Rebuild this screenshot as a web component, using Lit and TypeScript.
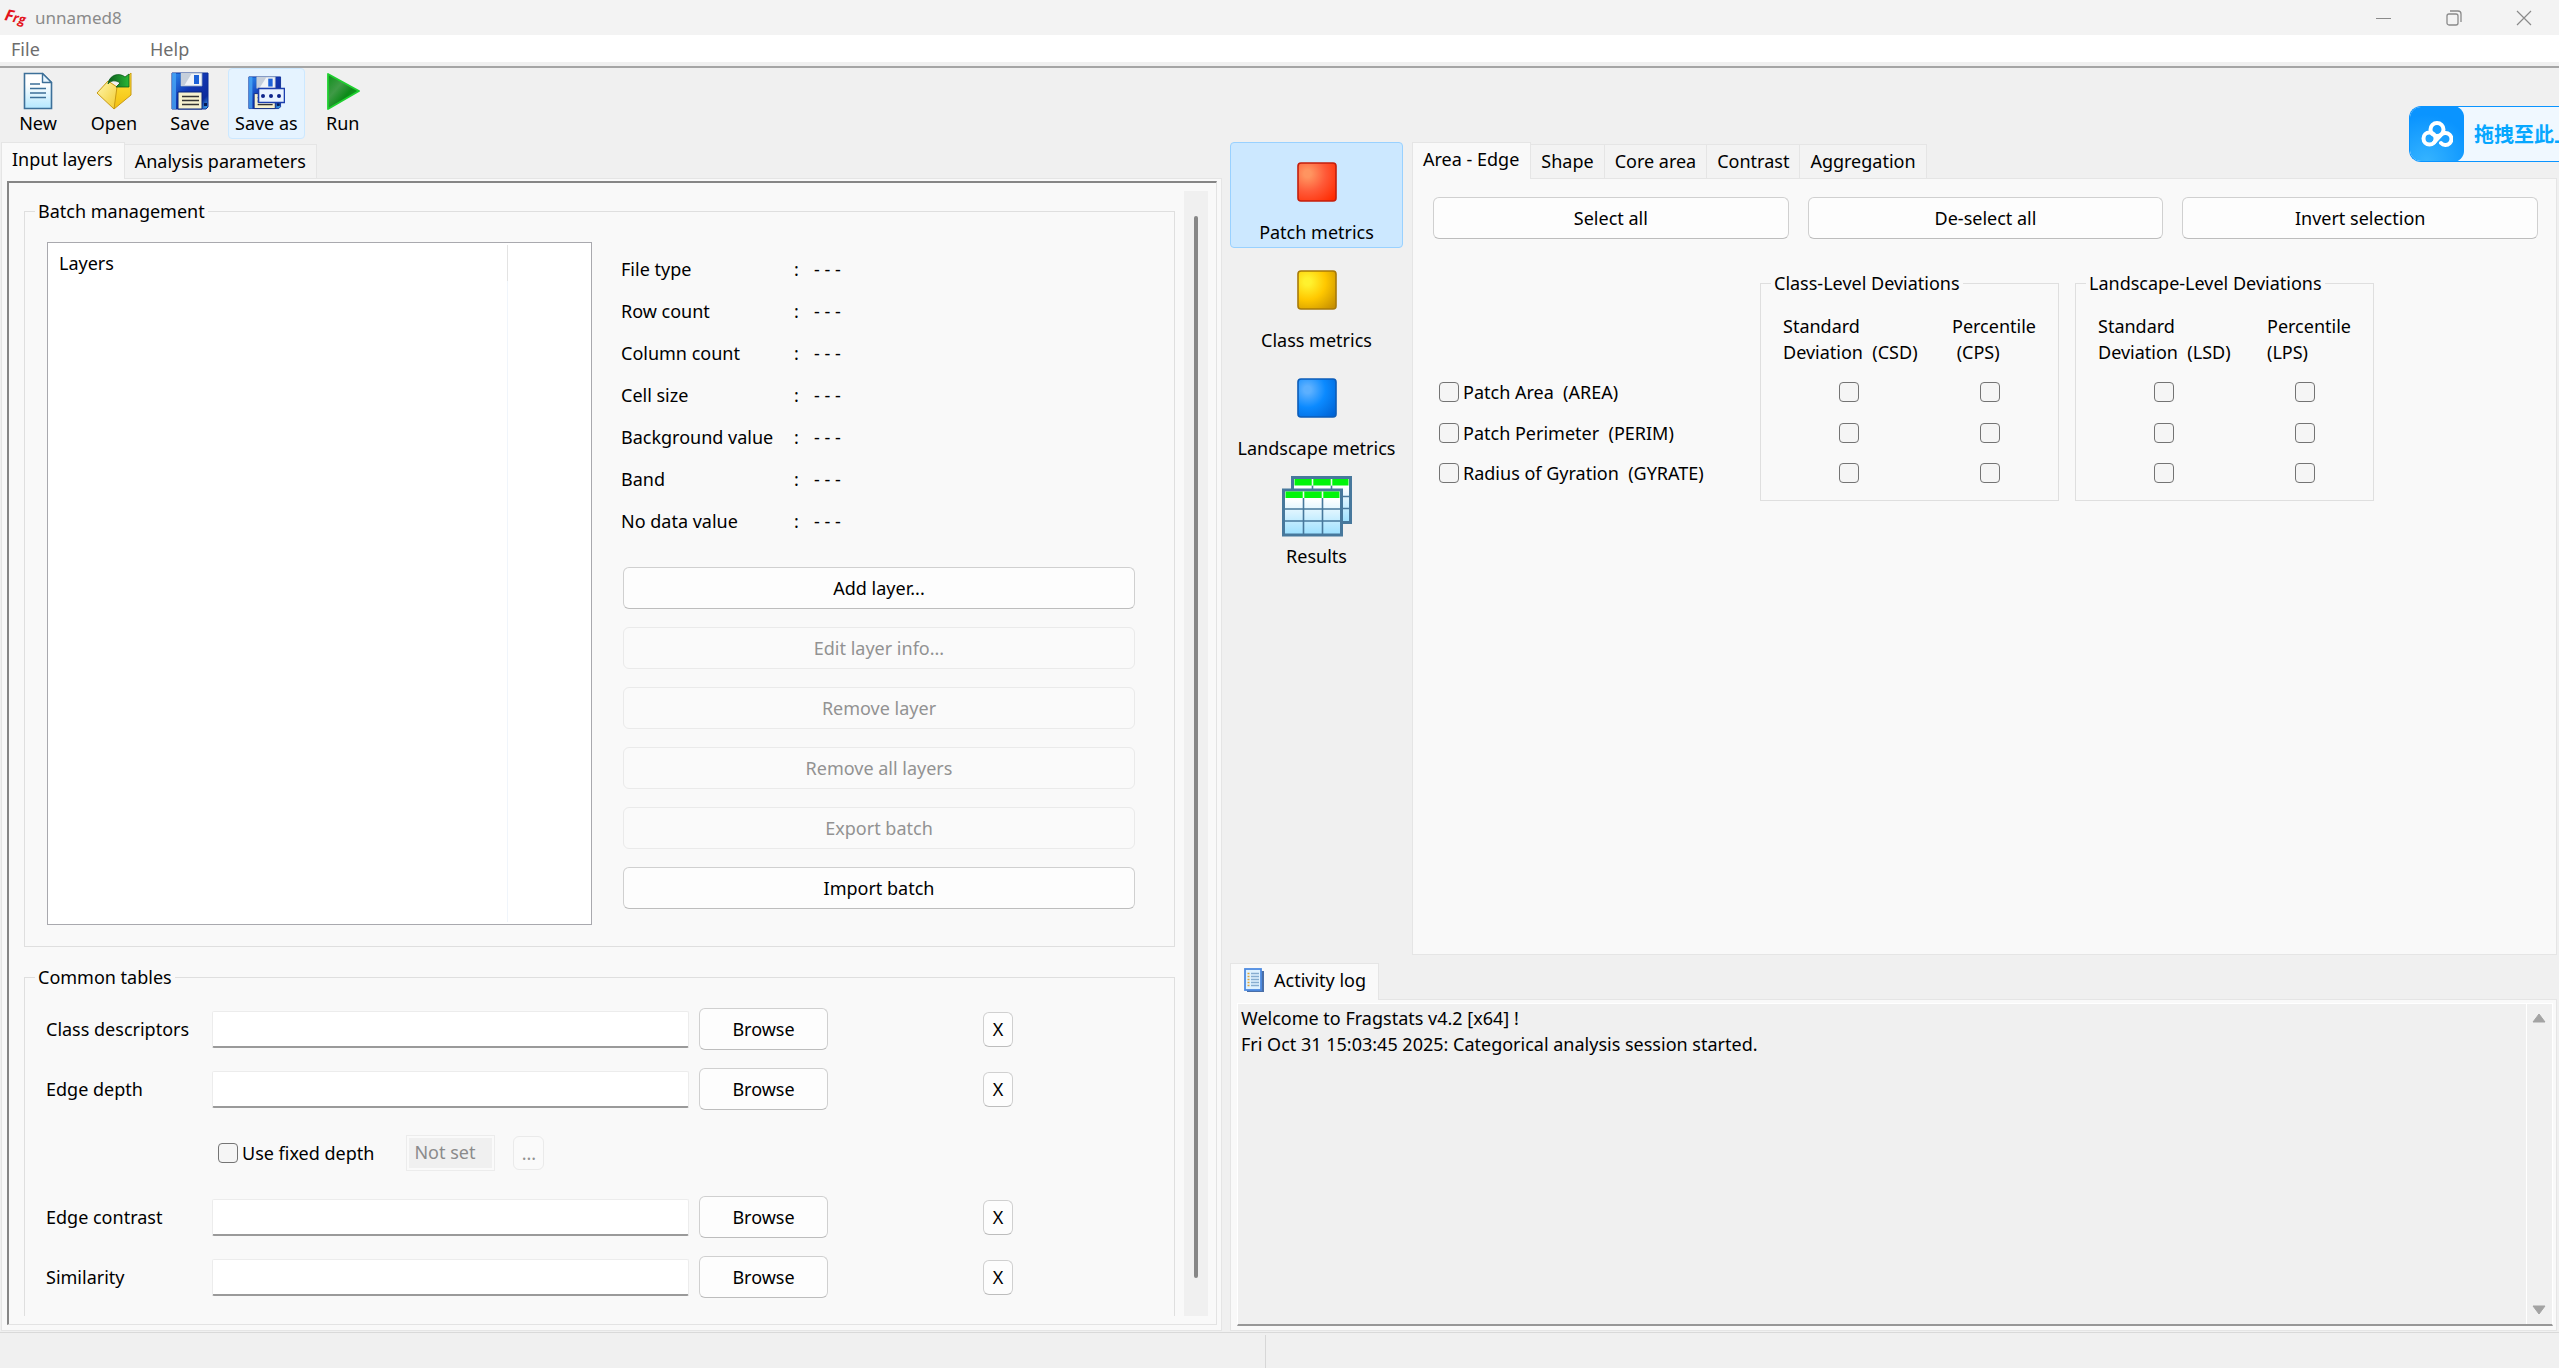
import { LitElement, html, css, svg } from "lit";
import { customElement, state } from "lit/decorators.js";
import { classMap } from "lit/directives/class-map.js";

const infoRows = [
  "File type",
  "Row count",
  "Column count",
  "Cell size",
  "Background value",
  "Band",
  "No data value",
];

const batchActions = [
  { label: "Add layer...", enabled: true },
  { label: "Edit layer info...", enabled: false },
  { label: "Remove layer", enabled: false },
  { label: "Remove all layers", enabled: false },
  { label: "Export batch", enabled: false },
  { label: "Import batch", enabled: true },
];

const metrics = [
  { label: "Patch Area  (AREA)", id: "area" },
  { label: "Patch Perimeter  (PERIM)", id: "perim" },
  { label: "Radius of Gyration  (GYRATE)", id: "gyrate" },
];

const deviations = [
  { title: "Class-Level Deviations", sd: "Standard\nDeviation  (CSD)", ps: "Percentile\n (CPS)", key: "c" },
  { title: "Landscape-Level Deviations", sd: "Standard\nDeviation  (LSD)", ps: "Percentile\n(LPS)", key: "l" },
];

const logText =
  "Welcome to Fragstats v4.2 [x64] !\nFri Oct 31 15:03:45 2025: Categorical analysis session started.";

const newIcon = html`<svg width="38" height="38" viewBox="0 0 38 38" aria-hidden="true">
  <defs><linearGradient id="gNew" x1="0" y1="0" x2="0" y2="1"><stop offset=".3" stop-color="#fff" /><stop offset="1" stop-color="#b4e8ff" /></linearGradient></defs>
  <path d="M5.5 1.5h18l9 9v26h-27z" fill="url(#gNew)" stroke="#3d7099" stroke-width="1.6" />
  <path d="M23.500 1.500v9h9z" fill="#e8f6ff" stroke="#3d7099" stroke-width="1.4" stroke-linejoin="round" />
  <path d="M11 12h10M11 16.500h16M11 21h16M11 25.500h16" stroke="#3d7099" stroke-width="1.500" />
</svg>`;

const openIcon = html`<svg width="38" height="38" viewBox="0 0 38 38" aria-hidden="true">
  <defs>
    <linearGradient id="gOp1" x1="0" y1="0" x2="1" y2="1"><stop offset="0" stop-color="#fff7b0" /><stop offset="1" stop-color="#f2cb2c" /></linearGradient>
    <linearGradient id="gOp2" x1="0" y1="0" x2="0" y2="1"><stop offset="0" stop-color="#ffe63c" /><stop offset="1" stop-color="#f3bf10" /></linearGradient>
    <linearGradient id="gOp3" x1="0" y1="0" x2="1" y2="0"><stop offset="0" stop-color="#0c5a1c" /><stop offset="1" stop-color="#27b836" /></linearGradient>
  </defs>
  <path d="M20 16 36 1v22L19 37z" fill="url(#gOp2)" stroke="#c99a12" />
  <path d="M2 21 13 9l9 6-3 22z" fill="url(#gOp1)" stroke="#c99a12" stroke-linejoin="round" />
  <path d="M13 12C14 3 24 0 30 5l4-3v13H21l4-4c-4-3-9-3-12 1z" fill="url(#gOp3)" stroke="#0d5d1c" stroke-width=".8" stroke-linejoin="round" />
</svg>`;

const floppy = svg`
  <path d="M1 1h36v34l-2 2H1z" fill="url(#gFl)" stroke="#0b2c96" />
  <path d="M1 1h4v36H1z" fill="#49a4f4" opacity=".8" />
  <path d="M10 1h21v13H10z" fill="#f1f4f8" stroke="#8fa3bd" stroke-width=".8" />
  <path d="M10 1h11l-8 13h-3z" fill="#c6cfdb" />
  <path d="M23 3h5v9h-5z" fill="#1d62d8" />
  <path d="M7 20h24v17H7z" fill="#f6f1cf" stroke="#08257c" />
  <path d="M11 24.500h17M11 28.500h17M11 32.500h17" stroke="#333" stroke-width="1.400" />
  <path d="M33 31h3v3h-3z" fill="#061a55" />`;

const floppyFill = svg`<linearGradient id="gFl" x1="0" y1="0" x2="1" y2="1"><stop offset="0" stop-color="#2b8cf0" /><stop offset=".45" stop-color="#1238b4" /><stop offset=".8" stop-color="#0d2b9c" /><stop offset="1" stop-color="#3db4f5" /></linearGradient>`;

const saveIcon = html`<svg width="38" height="38" viewBox="0 0 38 38" aria-hidden="true"><defs>${floppyFill}</defs>${floppy}</svg>`;

const saveAsIcon = html`<svg width="38" height="38" viewBox="0 0 38 38" aria-hidden="true">
  <defs>${floppyFill}</defs>
  <g transform="translate(1 4) scale(.88)">${floppy}</g>
  <path d="M11.500 16.500h26v14h-26z" fill="#e9f3ff" stroke="#1c3fae" stroke-width="1.600" />
  <circle cx="16" cy="24" r="2" fill="#10258c" />
  <circle cx="24" cy="24" r="2" fill="#10258c" />
  <circle cx="32" cy="24" r="2" fill="#10258c" />
</svg>`;

const runIcon = html`<svg width="38" height="38" viewBox="0 0 38 38" aria-hidden="true">
  <defs><linearGradient id="gRun" x1="0" y1="0" x2="1" y2="1"><stop offset="0" stop-color="#0f8f1c" /><stop offset=".35" stop-color="#3f9a46" /><stop offset=".6" stop-color="#0c8a18" /><stop offset="1" stop-color="#16c626" /></linearGradient></defs>
  <path d="M4 2 35 19 4 37z" fill="url(#gRun)" stroke="#1fd02f" stroke-width="1.800" stroke-linejoin="round" />
</svg>`;

const cube = (id: string, hi: string, mid: string, low: string, edge: string) => html`<svg width="40" height="40" viewBox="0 0 40 40" aria-hidden="true">
  <defs><radialGradient id=${id} cx=".25" cy=".28" r=".95"><stop offset=".1" stop-color=${hi} /><stop offset=".5" stop-color=${mid} /><stop offset="1" stop-color=${low} /></radialGradient></defs>
  <rect x="1" y="1" width="38" height="38" rx="3" fill="url(#${id})" stroke=${edge} stroke-width="1.600" />
</svg>`;

const sheet = (x: number, y: number) => svg`
  <rect x=${x} y=${y} width="58" height="45" fill="url(#gRes)" stroke="#47789c" stroke-width="3" />
  <rect x=${x + 2} y=${y + 1.5} width="54" height="6.500" fill="#00f50a" />
  <path d="M${x + 20} ${y + 8}v36M${x + 39} ${y + 8}v36M${x + 1} ${y + 19}h56M${x + 1} ${y + 31}h56" stroke="#47789c" stroke-width="1.600" />
  <path d="M${x + 20} ${y + 1.5}v6.500M${x + 39} ${y + 1.5}v6.500" stroke="#e9ffe9" stroke-width="1.600" />`;

const resultsIcon = html`<svg width="72" height="62" viewBox="0 0 72 62" aria-hidden="true">
  <defs><linearGradient id="gRes" x1="0" y1="0" x2="0" y2="1"><stop offset=".2" stop-color="#fff" /><stop offset="1" stop-color="#9be0ff" /></linearGradient></defs>
  ${sheet(11.5, 2.5)} ${sheet(2.5, 15)}
</svg>`;

const toolItems = [
  { label: "New", icon: newIcon },
  { label: "Open", icon: openIcon },
  { label: "Save", icon: saveIcon },
  { label: "Save as", icon: saveAsIcon, hot: true },
  { label: "Run", icon: runIcon },
];

const views = [
  { label: "Patch metrics", icon: cube("gRed", "#ff9460", "#ff5a38", "#ff2a00", "#c41e0c") },
  { label: "Class metrics", icon: cube("gYel", "#fff12e", "#ffc800", "#c79000", "#a87a08") },
  { label: "Landscape metrics", icon: cube("gBlu", "#5cb0ff", "#0b8aff", "#0064d6", "#0c5cb8") },
  { label: "Results", icon: resultsIcon },
];

@customElement("app-root")
export class AppRoot extends LitElement {
  @state() private view = 0;
  @state() private leftTab = 0;
  @state() private metricTab = 0;

  static styles = css`
    :host {
      display: flex;
      flex-direction: column;
      height: 100vh;
      overflow: hidden;
      background: #f0f0f0;
      color: #000;
      font: 18px/24px "Noto Sans", "Noto Sans CJK SC", sans-serif;
    }
    * { box-sizing: border-box; }
    svg { display: block; flex: none; }
    button, input, textarea { font: inherit; color: inherit; margin: 0; }
    button { cursor: default; white-space: nowrap; }

    .titlebar {
      display: flex;
      align-items: center;
      height: 35px;
      flex: none;
      padding-left: 4px;
      gap: 4px;
      background: #f3f3f3;
      color: #8a8a8a;
      font-size: 17px;
    }
    .mark { font: italic bold 16px "Open Sans", sans-serif; fill: #e3141c; }
    .mark-small { font-size: 13px; }
    .caption { flex: 1; font: inherit; margin: 0; }
    .winbtns { display: flex; }
    .winbtn {
      width: 70px;
      height: 35px;
      padding: 0;
      border: 0;
      background: none;
      display: grid;
      place-items: center;
    }
    .menubar {
      display: flex;
      flex: none;
      height: 27px;
      background: #fff;
      padding-left: 11px;
    }
    .menu {
      border: 0;
      padding: 0;
      background: none;
      color: #6d6d6d;
      line-height: 28px;
      text-align: left;
      min-width: 139px;
    }
    .rule {
      flex: none;
      height: 6px;
      background: #f0f0f0;
      border-bottom: 2px solid #fff;
    }
    .rule::before {
      content: "";
      display: block;
      height: 4px;
      border-bottom: 2px solid #a5a5a5;
    }
    .toolbar { display: flex; flex: none; height: 74px; }
    .tool {
      display: flex;
      flex-direction: column;
      align-items: center;
      gap: 1px;
      min-width: 76px;
      height: 71px;
      padding: 3px 6px 0;
      border: 1px solid transparent;
      border-radius: 4px;
      background: none;
    }
    .tool.hot { background: #e5f3ff; border-color: #cce8ff; }

    .workspace {
      flex: 1;
      min-height: 0;
      display: grid;
      grid-template-columns: minmax(0, 1222fr) minmax(0, 1337fr);
      grid-template-rows: minmax(0, 1fr);
    }
    .notebook { display: flex; flex-direction: column; min-width: 0; min-height: 0; }
    .tabs { display: flex; align-items: flex-end; flex: none; height: 36px; }
    .tab {
      height: 34px;
      padding: 0 10px;
      line-height: 33px;
      border: 1px solid #e5e5e5;
      border-width: 1px 1px 0 0;
      background: #f3f3f3;
    }
    .tab.on {
      position: relative;
      display: flex;
      align-items: center;
      gap: 10px;
      height: 37px;
      margin-bottom: -1px;
      padding: 0 11px 4px 10px;
      border-left-width: 1px;
      background: #f9f9f9;
      line-height: 24px;
    }
    .page { flex: 1; min-height: 0; background: #f9f9f9; border: 1px solid #e5e5e5; }

    .left { padding: 0 0 1px 1px; }
    .left .page { display: flex; padding: 2px 4px 5px 5px; }
    .scroller {
      flex: 1;
      min-width: 0;
      display: flex;
      gap: 9px;
      padding: 8px 8px 8px 15px;
      border: 1px solid #e3e3e3;
      border-top: 2px solid #868686;
      border-left: 2px solid #868686;
    }
    .form {
      flex: 1;
      min-width: 0;
      display: flex;
      flex-direction: column;
      gap: 18px;
      padding-top: 8px;
      overflow: hidden;
    }
    .track { flex: none; width: 24px; background: #f0f0f0; padding: 25px 10px 38px; }
    .thumb { height: 100%; border-radius: 2px; background: #878787; }

    .group { margin: 0; min-width: 0; border: 1px solid #dfdfdf; }
    .group > legend { padding: 0 3px; margin-left: -12px; white-space: nowrap; }
    .batch { padding: 19px 39px 21px 22px; flex: none; }
    .batch-body {
      display: grid;
      grid-template-columns: minmax(0, 545fr) minmax(0, 514fr);
      gap: 29px;
    }
    .layers { display: flex; background: #fff; border: 1px solid #a9a9ae; padding: 2px; }
    .layer-table { width: 85%; border-collapse: collapse; height: 100%; }
    .layer-table th {
      height: 36px;
      padding: 0 9px;
      font-weight: normal;
      text-align: left;
      border-right: 1px solid #e3e3e3;
    }
    .layer-table td { border-right: 1px solid #f0f5fb; }
    .info { padding: 6px 0 16px; }
    .facts { margin: 0 0 25px; }
    .fact { display: flex; line-height: 42px; }
    .fact dt { width: 173px; }
    .fact dd { margin: 0; white-space: pre; }
    .colon { display: inline-block; width: 20px; }
    .actions { display: flex; flex-direction: column; gap: 18px; padding-left: 2px; }
    .btn {
      height: 42px;
      padding: 0 0 1px;
      border: 1px solid #d0d0d0;
      border-bottom-color: #bdbdbd;
      border-radius: 6px;
      background: #fdfdfd;
      text-align: center;
    }
    .btn:disabled { color: #929292; border-color: #eaeaea; background: #fafafa; }

    .common { flex: 1; min-height: 0; border-bottom: 0; padding: 10px 39px 0 21px; }
    .common > legend { margin-left: -11px; }
    .file-row {
      display: grid;
      grid-template-columns: 166px minmax(0, 477fr) 139px minmax(0, 155fr) 30px minmax(0, 122fr);
      align-items: center;
      height: 60px;
    }
    .field {
      width: 100%;
      height: 37px;
      padding: 0 8px;
      border: 1px solid #ececec;
      border-bottom: 2px solid #9a9a9a;
      border-radius: 2px;
      background: #fff;
    }
    .browse { margin-left: 10px; }
    .clear { grid-column: 5; height: 35px; }
    .fixed-row { display: flex; align-items: center; height: 68px; padding-left: 172px; }
    .check { display: flex; align-items: center; gap: 4px; white-space: pre; }
    .box {
      appearance: none;
      display: block;
      flex: none;
      width: 20px;
      height: 20px;
      border: 1px solid #747474;
      border-radius: 4px;
      background: #f5f5f5;
    }
    .box:checked { background: #0067c0; }
    .depth {
      width: 89px;
      height: 36px;
      margin: 0 18px 0 32px;
      padding: 0 7px 3px;
      border: 1px solid #ececec;
      background: #f0f0f0;
      color: #8b8b8b;
      box-shadow: inset 0 0 0 2px #fafafa;
    }
    .more { width: 31px; height: 34px; }

    .right {
      display: flex;
      flex-direction: column;
      gap: 8px;
      min-width: 0;
      padding: 0 2px 1px 8px;
    }
    .upper { flex: 812; min-height: 0; display: flex; gap: 9px; }
    .views { flex: none; width: 173px; display: flex; flex-direction: column; gap: 2px; }
    .view {
      display: flex;
      flex-direction: column;
      align-items: center;
      height: 106px;
      padding: 0;
      border: 1px solid transparent;
      border-radius: 4px;
      background: none;
    }
    .view.on { background: #cce8ff; border-color: #99d1ff; }
    .glyph { height: 77px; display: grid; place-items: center; }
    .upper .notebook { flex: 1; }
    .upper .page { padding: 18px 18px 0 20px; }
    .selectors { display: grid; grid-template-columns: repeat(3, minmax(0, 1fr)); gap: 19px; margin-bottom: 32px; }
    .matrix { display: flex; align-items: flex-end; gap: 16px; padding-left: 6px; }
    .names { width: 305px; padding-bottom: 8px; }
    .names .check { height: 41px; }
    .names .check:last-child, .dev-table tr:last-child td { height: 40px; }
    .dev { padding: 18px 0 7px 22px; }
    .dev-table { border-collapse: collapse; table-layout: fixed; width: 275px; }
    .dev-table th {
      width: 169px;
      padding: 0 0 6px;
      font-weight: normal;
      text-align: left;
      line-height: 26px;
      white-space: pre;
    }
    .dev-table th + th { width: 106px; }
    .dev-table td { height: 41px; padding: 0 0 0 56px; vertical-align: middle; }
    .dev-table td + td { padding-left: 28px; }

    .log { flex: 367; }
    .log .tab.on { padding: 0 12px 4px 13px; }
    .log .page { display: flex; padding: 3px 3px 4px 6px; }
    .console {
      flex: 1;
      min-width: 0;
      display: flex;
      border: 1px solid #fff;
      border-bottom: 2px solid #979797;
      background: #f0f0f0;
    }
    .output {
      flex: 1;
      min-width: 0;
      resize: none;
      border: 0;
      outline: 0;
      padding: 1px 3px;
      background: none;
      line-height: 26px;
      overflow: hidden;
    }
    .arrows {
      display: flex;
      flex-direction: column;
      justify-content: space-between;
      width: 26px;
      padding: 9px 5px;
      border-left: 1px solid #fff;
    }
    .status {
      flex: none;
      height: 36px;
      display: grid;
      grid-template-columns: 1265fr 1294fr;
      border-top: 1px solid #d9d9d9;
      padding-top: 2px;
    }
    .cell + .cell { border-left: 1px solid #d7d7d7; }

    .dropzone {
      position: absolute;
      top: 106px;
      right: 0;
      width: 150px;
      height: 56px;
      display: flex;
      align-items: center;
      overflow: hidden;
      border: 1px solid #0a94ff;
      border-right: 0;
      border-radius: 12px 0 0 12px;
      background: #f0f8ff;
      color: #06a7ff;
      font-weight: bold;
      font-family: "Noto Sans CJK SC", sans-serif;
      font-size: 20px;
      white-space: nowrap;
    }
    .badge {
      flex: none;
      display: grid;
      place-items: center;
      width: 54px;
      height: 56px;
      margin-right: 10px;
      border-radius: 11px;
      background: radial-gradient(circle at 30% 100%, #36b4ff, #0a94ff 70%);
    }
  `;

  private tabs(labels: string[], active: number, pick: (i: number) => void) {
    return html`<div class="tabs" role="tablist">
      ${labels.map(
        (label, i) => html`<button
          class=${classMap({ tab: true, on: i === active })}
          role="tab"
          aria-selected=${i === active}
          @click=${() => pick(i)}
        >${label}</button>`
      )}
    </div>`;
  }

  private fileRow(label: string, id: string) {
    return html`<div class="file-row">
      <label for=${id}>${label}</label>
      <input class="field" id=${id} type="text" />
      <button class="btn browse">Browse</button>
      <button class="btn clear" aria-label="Clear ${label}">X</button>
    </div>`;
  }

  private header() {
    return html`
      <header class="titlebar">
        <svg width="27" height="32" viewBox="0 0 27 32" aria-hidden="true">
          <text class="mark" x="0" y="18" transform="rotate(12 0 18)">F<tspan class="mark-small">rg</tspan></text>
        </svg>
        <h1 class="caption">unnamed8</h1>
        <div class="winbtns">
          <button class="winbtn" aria-label="Minimize">
            <svg width="16" height="16" viewBox="0 0 16 16"><path d="M0 8.500h15" stroke="#8a8a8a" /></svg>
          </button>
          <button class="winbtn" aria-label="Restore">
            <svg width="16" height="16" viewBox="0 0 16 16" fill="none" stroke="#8a8a8a" stroke-width="1.300"><rect x="1" y="4" width="11" height="11" rx="2" /><path d="M4 1h8a3 3 0 0 1 3 3v8" /></svg>
          </button>
          <button class="winbtn" aria-label="Close">
            <svg width="16" height="16" viewBox="0 0 16 16"><path d="M1 1l14 14M15 1 1 15" stroke="#8a8a8a" stroke-width="1.200" /></svg>
          </button>
        </div>
      </header>
      <nav class="menubar">
        <button class="menu">File</button>
        <button class="menu">Help</button>
      </nav>
      <div class="rule"></div>
      <div class="toolbar" role="toolbar">
        ${toolItems.map(
          (t) => html`<button class=${classMap({ tool: true, hot: !!t.hot })}>${t.icon}<span>${t.label}</span></button>`
        )}
      </div>
    `;
  }

  private inputPane() {
    return html`<section class="notebook left">
      ${this.tabs(["Input layers", "Analysis parameters"], this.leftTab, (i) => (this.leftTab = i))}
      <div class="page">
        <div class="scroller">
          <div class="form">
            <fieldset class="group batch">
              <legend>Batch management</legend>
              <div class="batch-body">
                <div class="layers">
                  <table class="layer-table">
                    <thead><tr><th>Layers</th></tr></thead>
                    <tbody><tr><td></td></tr></tbody>
                  </table>
                </div>
                <div class="info">
                  <dl class="facts">
                    ${infoRows.map(
                      (r) => html`<div class="fact"><dt>${r}</dt><dd><span class="colon">:</span>- - -</dd></div>`
                    )}
                  </dl>
                  <div class="actions">
                    ${batchActions.map((a) => html`<button class="btn" ?disabled=${!a.enabled}>${a.label}</button>`)}
                  </div>
                </div>
              </div>
            </fieldset>
            <fieldset class="group common">
              <legend>Common tables</legend>
              ${this.fileRow("Class descriptors", "descriptors")} ${this.fileRow("Edge depth", "edge-depth")}
              <div class="fixed-row">
                <label class="check"><input class="box" type="checkbox" />Use fixed depth</label>
                <input class="depth" type="text" value="Not set" aria-label="Fixed depth" disabled />
                <button class="btn more" disabled>...</button>
              </div>
              ${this.fileRow("Edge contrast", "edge-contrast")} ${this.fileRow("Similarity", "similarity")}
            </fieldset>
          </div>
          <div class="track"><div class="thumb"></div></div>
        </div>
      </div>
    </section>`;
  }

  private metricPane() {
    return html`<section class="notebook">
      ${this.tabs(
        ["Area - Edge", "Shape", "Core area", "Contrast", "Aggregation"],
        this.metricTab,
        (i) => (this.metricTab = i)
      )}
      <div class="page">
        <div class="selectors">
          <button class="btn">Select all</button>
          <button class="btn">De-select all</button>
          <button class="btn">Invert selection</button>
        </div>
        <div class="matrix">
          <div class="names">
            ${metrics.map((m) => html`<label class="check"><input class="box" type="checkbox" />${m.label}</label>`)}
          </div>
          ${deviations.map(
            (d) => html`<fieldset class="group dev">
              <legend>${d.title}</legend>
              <table class="dev-table">
                <thead><tr><th scope="col">${d.sd}</th><th scope="col">${d.ps}</th></tr></thead>
                <tbody>
                  ${metrics.map(
                    (m) => html`<tr>
                      <td><input class="box" type="checkbox" aria-label="${m.label} ${d.sd}" /></td>
                      <td><input class="box" type="checkbox" aria-label="${m.label} ${d.ps}" /></td>
                    </tr>`
                  )}
                </tbody>
              </table>
            </fieldset>`
          )}
        </div>
      </div>
    </section>`;
  }

  private logPane() {
    return html`<section class="notebook log">
      <div class="tabs" role="tablist">
        <button class="tab on" role="tab" aria-selected="true">
          <svg width="20" height="24" viewBox="0 0 20 24" aria-hidden="true">
            <path d="M3 3h17v21H3z" fill="#4a6fa8" />
            <rect x="1" y="1" width="16" height="21" fill="#dff2ff" stroke="#4d8ae0" stroke-width="1.800" />
            <path d="M7 5.500h8M7 8.500h8M7 11.500h8M7 14.500h8M7 17.500h8" stroke="#86add0" stroke-width="1.400" />
            <path d="M3.500 5.500h2M3.500 8.500h2M3.500 11.500h2M3.500 14.500h2M3.500 17.500h2" stroke="#e0a53a" stroke-width="1.400" />
          </svg>
          Activity log
        </button>
      </div>
      <div class="page">
        <div class="console">
          <textarea class="output" readonly aria-label="Activity log" .value=${logText}></textarea>
          <div class="arrows">
            <svg width="14" height="10" viewBox="0 0 14 10"><path d="M7 1 13 9H1z" fill="#a3a3a3" stroke="#a3a3a3" stroke-linejoin="round" /></svg>
            <svg width="14" height="10" viewBox="0 0 14 10"><path d="M7 9 13 1H1z" fill="#a3a3a3" stroke="#a3a3a3" stroke-linejoin="round" /></svg>
          </div>
        </div>
      </div>
    </section>`;
  }

  render() {
    return html`
      ${this.header()}
      <main class="workspace">
        ${this.inputPane()}
        <div class="right">
          <div class="upper">
            <nav class="views">
              ${views.map(
                (v, i) => html`<button
                  class=${classMap({ view: true, on: i === this.view })}
                  @click=${() => (this.view = i)}
                ><span class="glyph">${v.icon}</span>${v.label}</button>`
              )}
            </nav>
            ${this.metricPane()}
          </div>
          ${this.logPane()}
        </div>
      </main>
      <footer class="status"><div class="cell"></div><div class="cell"></div></footer>
      <aside class="dropzone">
        <span class="badge">
          <svg width="32" height="26" viewBox="0 0 32 26" fill="none" stroke="#fff" stroke-width="4" aria-hidden="true">
            <circle cx="16" cy="8.500" r="6.500" />
            <circle cx="8.500" cy="17.500" r="6" />
            <path d="M13 21.500 20 14a6 6 0 1 1 0 8" stroke-linecap="round" />
          </svg>
        </span>
        <span>拖拽至此上传</span>
      </aside>
    `;
  }
}
